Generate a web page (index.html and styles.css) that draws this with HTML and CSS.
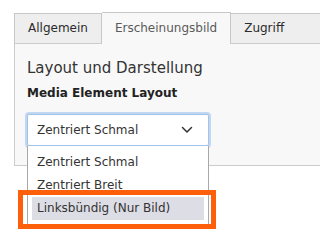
FILE: index.html
```html
<!DOCTYPE html>
<html lang="de">
<head>
<meta charset="utf-8">
<title>Media Element Layout</title>
<link rel="stylesheet" href="styles.css">
</head>
<body>
<div class="page">
  <div class="tabs">
    <div class="tab">Allgemein</div>
    <div class="tab active">Erscheinungsbild</div>
    <div class="tab last">Zugriff</div>
  </div>
  <div class="panel">
    <h2 class="heading">Layout und Darstellung</h2>
    <div class="label">Media Element Layout</div>
    <div class="select-wrap">
      <div class="select">
        <span class="select-value">Zentriert Schmal</span>
        <svg class="chevron" width="12" height="8" viewBox="0 0 12 8"><polyline points="1.5,1.5 6,6 10.5,1.5" fill="none" stroke="#333" stroke-width="1.5" stroke-linecap="round" stroke-linejoin="round"/></svg>
      </div>
      <ul class="dropdown">
        <li class="option">Zentriert Schmal</li>
        <li class="option">Zentriert Breit</li>
        <li class="option selected">Linksbündig (Nur Bild)<span class="marker"></span></li>
      </ul>
    </div>
  </div>
</div>
</body>
</html>
```
FILE: styles.css
```css
html, body {
  margin: 0;
  padding: 0;
  background: #ffffff;
}
body {
  min-height: 247px;
  font-family: "DejaVu Sans", Verdana, sans-serif;
  color: #333333;
}
.page {
  padding: 12px 0 0 14px;
}
.tabs {
  display: flex;
  align-items: flex-end;
  font-size: 12px;
}
.tab {
  box-sizing: border-box;
  height: 30px;
  line-height: 29px;
  padding: 0 13px;
  background: #eeeeee;
  border: 1px solid #c8c8c8;
  border-bottom: none;
  color: #2b2b2b;
}
.tab + .tab {
  border-left: none;
}
.tab.active {
  height: 32px;
  line-height: 30px;
  margin-bottom: -1px;
  background: #f8f8f8;
  color: #5a5a5a;
  position: relative;
  z-index: 1;
}
.tab.active + .tab {
  border-left: 1px solid #c8c8c8;
  margin-left: -1px;
}
.tab.last {
  flex: 1;
  border-right: none;
}
.panel {
  box-sizing: border-box;
  height: 123px;
  background: #f8f8f8;
  border: 1px solid #cccccc;
  border-right: none;
  padding: 14px 12px 0 12px;
}
.heading {
  margin: 0;
  font-size: 15px;
  font-weight: normal;
  line-height: 20px;
  color: #333333;
}
.label {
  margin-top: 7px;
  font-size: 12px;
  font-weight: bold;
  line-height: 16px;
  color: #222222;
}
.select-wrap {
  position: relative;
  margin-top: 13px;
  width: 182px;
}
.select {
  box-sizing: border-box;
  height: 32px;
  display: flex;
  align-items: center;
  justify-content: space-between;
  padding: 0 15px 0 9px;
  background: #ffffff;
  border: 1px solid #9fc3ea;
  border-radius: 2px;
  box-shadow: 0 0 0 2px rgba(150, 190, 235, 0.55);
  font-size: 12px;
}
.chevron {
  display: block;
}
.dropdown {
  position: absolute;
  left: 0;
  top: 32px;
  box-sizing: border-box;
  width: 182px;
  margin: 0;
  padding: 5px 4px 4px 4px;
  list-style: none;
  background: #ffffff;
  border: 1px solid #a8a8a8;
  border-top: none;
  font-size: 12px;
  z-index: 2;
}
.option {
  position: relative;
  height: 23px;
  line-height: 23px;
  padding-left: 5px;
  color: #333333;
}
.option.selected {
  background: #dddde5;
}
.marker {
  position: absolute;
  left: -14px;
  top: -7px;
  right: -12px;
  bottom: -9px;
  border: 5px solid #fe5f0a;
}
```
